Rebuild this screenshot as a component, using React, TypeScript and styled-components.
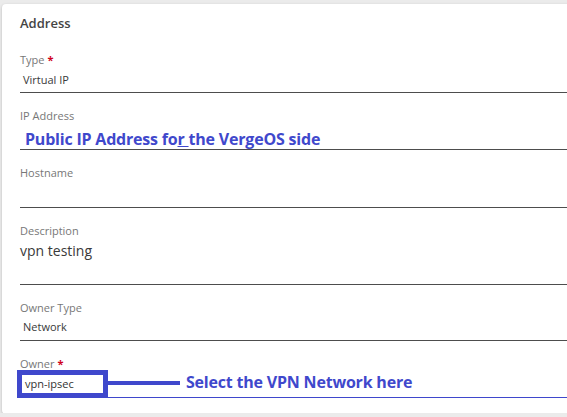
import React from "react";
import styled, { createGlobalStyle } from "styled-components";

const GlobalStyle = createGlobalStyle`
  html, body {
    margin: 0;
    padding: 0;
    background: #ebebeb;
    overflow: hidden;
    font-family: "Open Sans", "Liberation Sans", sans-serif;
  }
`;

const Page = styled.div`
  padding: 4px 0 0 2px;
  height: 413px;
  box-sizing: border-box;
`;

const Card = styled.div`
  width: calc(100% + 24px);
  background: #fff;
  border-radius: 4px;
  box-shadow: 0 1px 3px rgba(0, 0, 0, 0.22);
  padding: 11px 0 16px 18px;
  box-sizing: border-box;
`;

const Title = styled.h2`
  margin: 0 0 22px;
  font-size: 13px;
  line-height: 16px;
  font-weight: 600;
  color: #444;
`;

const Fields = styled.div`
  display: flex;
  flex-direction: column;
  gap: 16px;
`;

const Field = styled.div`
  display: flex;
  flex-direction: column;
`;

const Label = styled.label`
  font-size: 11px;
  line-height: 14px;
  color: #777;
`;

const Required = styled.span`
  color: #d0021b;
  font-weight: 700;
  margin-left: 3px;
`;

const Value = styled.div<{ $height: number; $pad: number; $accent?: boolean }>`
  position: relative;
  height: ${(p) => p.$height}px;
  padding-top: ${(p) => p.$pad}px;
  box-sizing: border-box;
  border-bottom: 1px solid ${(p) => (p.$accent ? "#3f48cc" : "#4d4d4d")};
`;

const ValueText = styled.span<{ $size?: number }>`
  display: block;
  padding-left: ${(p) => (p.$size ? 0 : 3)}px;
  font-size: ${(p) => p.$size ?? 11}px;
  line-height: ${(p) => (p.$size ? 18 : 14)}px;
  color: #3a3a3a;
`;

const Note = styled.span`
  display: block;
  padding-left: 5px;
  font-size: 16px;
  line-height: 20px;
  font-weight: 700;
  letter-spacing: -0.2px;
  color: #3f48cc;
  white-space: nowrap;
`;

const Caret = styled.span`
  text-decoration: underline;
  text-decoration-thickness: 1px;
`;

const Callout = styled.div`
  position: absolute;
  left: -3px;
  top: -1px;
  display: flex;
  align-items: center;
`;

const HighlightBox = styled.div`
  width: 91px;
  height: 28px;
  box-sizing: border-box;
  border: 5px solid #3f48cc;
  background: #fff;
  font-size: 11px;
  line-height: 18px;
  color: #333;
  padding-left: 3px;
`;

const Connector = styled.div`
  width: 72px;
  height: 4px;
  margin-top: -2px;
  background: #3f48cc;
`;

const CalloutText = styled(Note)`
  padding-left: 6px;
  margin-top: -4px;
`;

const App = () => {
  return (
    <Page>
      <GlobalStyle />
      <Card>
        <Title>Address</Title>
        <Fields>
          <Field>
            <Label>
              Type<Required>*</Required>
            </Label>
            <Value $height={26} $pad={6}>
              <ValueText>Virtual IP</ValueText>
            </Value>
          </Field>
          <Field>
            <Label>IP Address</Label>
            <Value $height={27} $pad={6}>
              <Note>
                Public IP Address fo<Caret>r </Caret>the VergeOS side
              </Note>
            </Value>
          </Field>
          <Field>
            <Label>Hostname</Label>
            <Value $height={28} $pad={0} />
          </Field>
          <Field>
            <Label>Description</Label>
            <Value $height={47} $pad={4}>
              <ValueText $size={14}>vpn testing</ValueText>
            </Value>
          </Field>
          <Field>
            <Label>Owner Type</Label>
            <Value $height={26} $pad={5}>
              <ValueText>Network</ValueText>
            </Value>
          </Field>
          <Field>
            <Label>
              Owner<Required>*</Required>
            </Label>
            <Value $height={27} $pad={0} $accent>
              <Callout>
                <HighlightBox>vpn-ipsec</HighlightBox>
                <Connector />
                <CalloutText>Select the VPN Network here</CalloutText>
              </Callout>
            </Value>
          </Field>
        </Fields>
      </Card>
    </Page>
  );
};

export default App;
